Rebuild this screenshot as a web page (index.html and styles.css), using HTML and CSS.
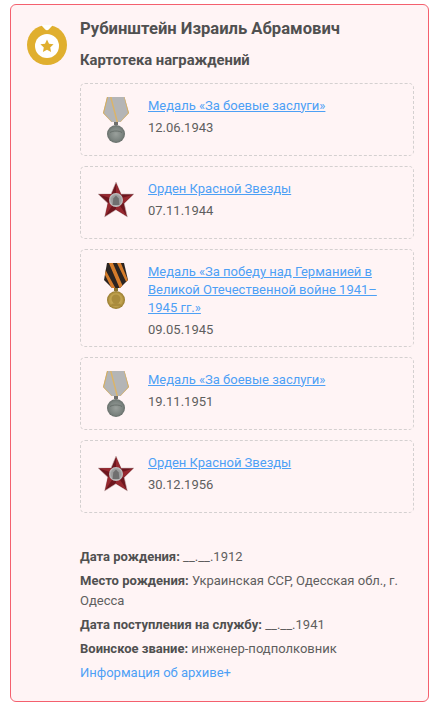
FILE: index.html
```html
<!DOCTYPE html>
<html lang="ru">
<head>
<meta charset="utf-8">
<title>Картотека награждений</title>
<link rel="stylesheet" href="styles.css">
</head>
<body>
<svg class="defs" width="0" height="0" aria-hidden="true">
  <defs>
    <radialGradient id="silver"><stop offset="0" stop-color="#9aa09c"/><stop offset=".75" stop-color="#7b837f"/><stop offset="1" stop-color="#666e6a"/></radialGradient>
    <radialGradient id="gold"><stop offset="0" stop-color="#cfb46a"/><stop offset=".7" stop-color="#bfa04c"/><stop offset="1" stop-color="#94782c"/></radialGradient>
    <radialGradient id="disc"><stop offset="0" stop-color="#8d8d8d"/><stop offset=".7" stop-color="#9f9f9f"/><stop offset="1" stop-color="#c8c8c8"/></radialGradient>
    <clipPath id="rib"><path d="M4 0h17l4 17-8 8H9L1 17z"/></clipPath>
    <symbol id="m-boevye" viewBox="0 0 26 46">
      <path d="M4 0h17.500L26 16l-8.500 9h-9L0 16z" fill="#b4b5b6"/>
      <path d="M4 0h1L1 16l8 9h-.5L0 16zM21.500 0H21l4 16-8 9h.5L26 16z" fill="#d9ad58"/>
      <path d="M7 0h1.500l6.500 25h-1.500z" fill="#dcb468"/>
      <rect x="11" y="25" width="4" height="3" fill="#6f6f6c"/>
      <circle cx="13" cy="37" r="9" fill="url(#silver)"/>
      <path d="M7 35.500c3-2 9-2 12 0" fill="none" stroke="#5f6763" stroke-width=".8"/>
    </symbol>
    <symbol id="m-star" viewBox="0 0 36 36">
      <path d="M18 0l5 12H36l-9.800 9.200L29.400 35 18 27.800 6.600 35l3.200-13.800L0 12h13z" fill="#6e161e" stroke="#cbbcbc" stroke-width=".6"/>
      <path d="M18 1v17l5-6zM35 12.500l-17 5.500 8.200 3.200zM28.800 34L18 18v9.800zM7.200 34L18 18l-8.200 3.200zM1 12.500l17 5.500-5-6z" fill="#96282f"/>
      <circle cx="18" cy="18" r="7" fill="url(#disc)"/>
      <path d="M14.500 23l.8-6.500 2.700-3 2.700 3 .8 6.500z" fill="#6f6f6f"/>
    </symbol>
    <symbol id="m-pobeda" viewBox="0 0 26 46">
      <g clip-path="url(#rib)">
        <rect width="26" height="25" fill="#2b2421"/>
        <path d="M5-2l4 0 12 28h-4zM13-2h4l10 24v5zM-1 6l3 0 12 22h-4zM-2 16h2l6 10H2z" fill="#d47b2a"/>
      </g>
      <rect x="11" y="25" width="4" height="3" fill="#8b7430"/>
      <circle cx="13" cy="37" r="9" fill="url(#gold)"/>
      <circle cx="13" cy="36" r="4.500" fill="#a98b3c"/>
      <path d="M7 43c2-4 10-4 12 0" fill="#a98b3c"/>
    </symbol>
  </defs>
</svg>
<main class="card">
  <div class="side">
    <svg class="logo" viewBox="0 0 40 40" aria-hidden="true">
      <circle cx="20" cy="20" r="20" fill="#e0af2e"/>
      <path d="M15 -1h10v2l-2.800 3a3 3 0 0 1-4.400 0L15 1z" fill="#fff"/>
      <circle cx="20" cy="21" r="12" fill="#fff"/>
      <path d="M20 14.500l2 4.300 4.600.500-3.400 3.200.9 4.600-4.100-2.300-4.100 2.300.9-4.600-3.400-3.200 4.600-.500z" fill="#e0af2e"/>
    </svg>
  </div>
  <div class="content">
    <h1 class="name">Рубинштейн Израиль Абрамович</h1>
    <h2 class="sub">Картотека награждений</h2>
    <ul class="awards">
      <li class="award">
        <div class="pic"><svg class="medal-b"><use href="#m-boevye"/></svg></div>
        <div class="info"><a class="link" href="#">Медаль «За боевые заслуги»</a><div class="date">12.06.1943</div></div>
      </li>
      <li class="award">
        <div class="pic"><svg class="medal-s"><use href="#m-star"/></svg></div>
        <div class="info"><a class="link" href="#">Орден Красной Звезды</a><div class="date">07.11.1944</div></div>
      </li>
      <li class="award">
        <div class="pic"><svg class="medal-p"><use href="#m-pobeda"/></svg></div>
        <div class="info"><a class="link" href="#">Медаль «За победу над Германией в Великой Отечественной войне 1941–1945 гг.»</a><div class="date">09.05.1945</div></div>
      </li>
      <li class="award">
        <div class="pic"><svg class="medal-b"><use href="#m-boevye"/></svg></div>
        <div class="info"><a class="link" href="#">Медаль «За боевые заслуги»</a><div class="date">19.11.1951</div></div>
      </li>
      <li class="award">
        <div class="pic"><svg class="medal-s"><use href="#m-star"/></svg></div>
        <div class="info"><a class="link" href="#">Орден Красной Звезды</a><div class="date">30.12.1956</div></div>
      </li>
    </ul>
    <div class="facts">
      <p class="fact"><b>Дата рождения:</b> __.__.1912</p>
      <p class="fact"><b>Место рождения:</b> Украинская ССР, Одесская обл., г. Одесса</p>
      <p class="fact"><b>Дата поступления на службу:</b> __.__.1941</p>
      <p class="fact"><b>Воинское звание:</b> инженер-подполковник</p>
      <a class="more" href="#">Информация об архиве+</a>
    </div>
  </div>
</main>
</body>
</html>
```
FILE: styles.css
```css
* { box-sizing: border-box; }
html, body { margin: 0; padding: 0; }
body {
  padding: 4px 5px 4px 10px;
  background: #fff;
  font-family: Roboto, "Noto Sans", sans-serif;
  font-size: 13px;
  color: #5e5e5e;
}
.defs { position: absolute; }
.card {
  display: flex;
  width: 419px;
  height: 698px;
  padding: 12px 14px 0 15.500px;
  background: #fff4f5;
  border: 1.500px solid #f4606e;
  border-radius: 6px;
}
.side { flex: 0 0 53.500px; padding-top: 7.500px; }
.logo { display: block; width: 40px; height: 40px; }
.content { flex: 1; min-width: 0; }
.name { margin: 0; font-size: 16.600px; line-height: 24px; font-weight: 700; color: #505050; }
.sub { margin: 7px 0 0; font-size: 14.800px; line-height: 24px; font-weight: 700; color: #505050; }
.awards { list-style: none; margin: 11px 0 0; padding: 0; display: flex; flex-direction: column; gap: 10.500px; }
.award {
  display: flex;
  align-items: flex-start;
  min-height: 72.500px;
  padding: 12.500px 16px 5.500px 0;
  border: 1px dashed #d4d0d0;
  border-radius: 5px;
}
.pic { flex: 0 0 67px; display: flex; justify-content: center; padding: .5px 0 0 3px; }
.medal-b { width: 26px; height: 46px; }
.medal-s { width: 36px; height: 36px; margin-top: 2px; }
.medal-p { width: 26px; height: 46px; }
.info { flex: 1; min-width: 0; }
.link { color: #4da0f5; text-decoration: underline; line-height: 18px; display: block; }
.date { margin-top: 3.500px; line-height: 20px; }
.facts { margin-top: 34.500px; }
.fact { margin: 0 0 4px; line-height: 20px; }
.fact b { color: #505050; }
.more { color: #4da0f5; text-decoration: none; line-height: 20px; display: block; }
```
